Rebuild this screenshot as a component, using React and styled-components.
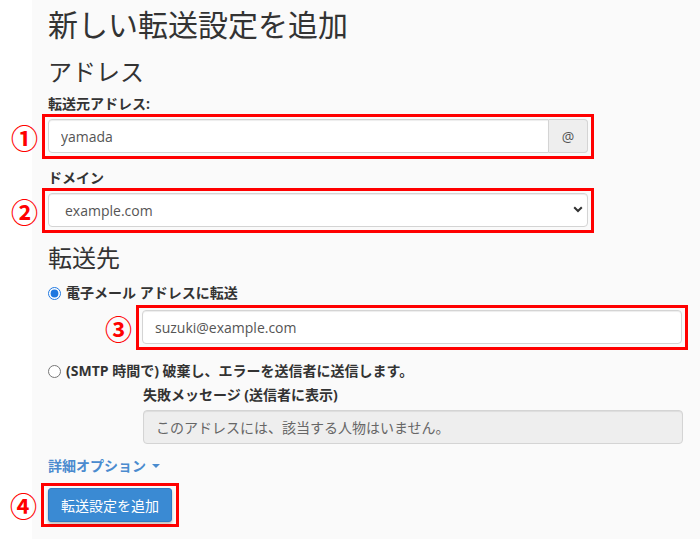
import styled, { createGlobalStyle } from "styled-components";

const GlobalStyle = createGlobalStyle`
  html, body {
    margin: 0;
    padding: 0;
    background: #fff;
  }
  body {
    font-family: "Open Sans", "Noto Sans CJK JP", sans-serif;
    font-size: 14px;
    color: #333;
  }
`;

const Page = styled.div`
  display: flex;
  min-height: 539px;
`;

const Gutter = styled.div`
  width: 32px;
  flex-shrink: 0;
  background: #fff;
`;

const Panel = styled.main`
  flex: 1;
  background: #fafafa;
  padding: 8px 12px 0 16px;
`;

const Title = styled.h1`
  margin: 0;
  font-size: 30px;
  font-weight: 400;
  line-height: 33px;
  color: #333;
`;

const SectionTitle = styled.h2`
  margin: ${(p) => p.$top || 18}px 0 0;
  font-size: 24px;
  font-weight: 400;
  line-height: 26px;
  color: #333;
`;

const FieldLabel = styled.label`
  display: block;
  margin-top: ${(p) => p.$top || 0}px;
  font-weight: 700;
  line-height: 18px;
  color: #333;
`;

const Callout = styled.div`
  position: relative;
  width: fit-content;
  border: 3px solid #f00;
  padding: ${(p) => p.$pad || "2px 3px 3px"};
  margin: ${(p) => p.$margin || "0 0 0 -6px"};
`;

const Marker = styled.span`
  position: absolute;
  right: calc(100% + 7px);
  top: 50%;
  transform: translateY(-50%);
  font-family: "Noto Sans CJK JP", sans-serif;
  font-size: 27px;
  font-weight: 700;
  line-height: 1;
  color: #f00;
`;

const InputGroup = styled.div`
  display: flex;
  width: 540px;
`;

const TextInput = styled.input`
  box-sizing: border-box;
  width: ${(p) => (p.$grow ? "auto" : "540px")};
  flex: ${(p) => (p.$grow ? 1 : "none")};
  height: 34px;
  padding: 6px 12px;
  font: inherit;
  font-size: 14px;
  color: #555;
  background: #fff;
  border: 1px solid #d4d4d4;
  border-radius: ${(p) => (p.$grow ? "4px 0 0 4px" : "4px")};
  box-shadow: inset 0 1px 1px rgba(0, 0, 0, 0.075);
  outline: none;

  &:disabled {
    background: #eee;
    color: #666;
  }
`;

const Addon = styled.span`
  box-sizing: border-box;
  width: 39px;
  display: flex;
  align-items: center;
  justify-content: center;
  background: #eee;
  color: #555;
  border: 1px solid #d4d4d4;
  border-left: none;
  border-radius: 0 4px 4px 0;
  font-size: 14px;
`;

const SelectWrap = styled.div`
  position: relative;
  width: 540px;
`;

const Select = styled.select`
  box-sizing: border-box;
  width: 100%;
  height: 34px;
  padding: 6px 12px 6px 16px;
  appearance: none;
  font: inherit;
  font-size: 14px;
  color: #555;
  background: #fff;
  border: 1px solid #d4d4d4;
  border-radius: 4px;
  box-shadow: inset 0 1px 1px rgba(0, 0, 0, 0.075);
`;

const Chevron = styled.svg`
  position: absolute;
  right: 5px;
  top: 13px;
  pointer-events: none;
`;

const RadioRow = styled.label`
  display: flex;
  align-items: center;
  gap: 5px;
  margin-top: ${(p) => p.$top || 0}px;
  font-weight: 700;
  line-height: 20px;
  color: #333;

  input {
    margin: 0;
    width: 13px;
    height: 13px;
    accent-color: #1f78e0;
  }
`;

const Indent = styled.div`
  margin-left: 95px;
  margin-top: ${(p) => p.$top || 0}px;
`;

const SubLabel = styled.div`
  font-weight: 700;
  line-height: 20px;
  margin-bottom: 5px;
  color: #333;
`;

const ToggleLink = styled.a`
  display: inline-flex;
  align-items: center;
  gap: 6px;
  margin-top: 12px;
  font-weight: 700;
  line-height: 20px;
  color: #4a8bcf;
  text-decoration: none;
  cursor: pointer;
`;

const Caret = styled.span`
  width: 0;
  height: 0;
  border-left: 4px solid transparent;
  border-right: 4px solid transparent;
  border-top: 4px solid #4a8bcf;
`;

const PrimaryButton = styled.button`
  box-sizing: border-box;
  height: 34px;
  padding: 6px 12px;
  font: inherit;
  font-size: 14px;
  color: #fff;
  background: #3a8ad3;
  border: 1px solid #2f7bc2;
  border-radius: 3px;
  box-shadow: 0 2px 3px rgba(0, 0, 0, 0.25);
  cursor: pointer;
`;

export default function App() {
  return (
    <>
      <GlobalStyle />
      <Page>
        <Gutter />
        <Panel>
          <Title>新しい転送設定を追加</Title>

          <SectionTitle>アドレス</SectionTitle>
          <FieldLabel $top={10}>転送元アドレス:</FieldLabel>
          <Callout $margin="1px 0 0 -6px">
            <Marker>①</Marker>
            <InputGroup>
              <TextInput $grow defaultValue="yamada" />
              <Addon>@</Addon>
            </InputGroup>
          </Callout>

          <FieldLabel $top={10}>ドメイン</FieldLabel>
          <Callout $margin="1px 0 0 -6px">
            <Marker>②</Marker>
            <SelectWrap>
              <Select defaultValue="example.com">
                <option>example.com</option>
              </Select>
              <Chevron width="10" height="7" viewBox="0 0 10 7">
                <path
                  d="M1.2 1.2L5 5L8.8 1.2"
                  fill="none"
                  stroke="#333"
                  strokeWidth="2"
                />
              </Chevron>
            </SelectWrap>
          </Callout>

          <SectionTitle $top={12}>転送先</SectionTitle>
          <RadioRow $top={12}>
            <input type="radio" name="dest" defaultChecked />
            電子メール アドレスに転送
          </RadioRow>
          <Callout $margin="2px 0 0 88px">
            <Marker>③</Marker>
            <TextInput defaultValue="suzuki@example.com" />
          </Callout>

          <RadioRow $top={11}>
            <input type="radio" name="dest" />
            (SMTP 時間で) 破棄し、エラーを送信者に送信します。
          </RadioRow>
          <Indent $top={4}>
            <SubLabel>失敗メッセージ (送信者に表示)</SubLabel>
            <TextInput disabled defaultValue="このアドレスには、該当する人物はいません。" />
          </Indent>

          <ToggleLink>
            詳細オプション <Caret />
          </ToggleLink>

          <Callout $pad="2px 4px" $margin="7px 0 0 -7px">
            <Marker>④</Marker>
            <PrimaryButton>転送設定を追加</PrimaryButton>
          </Callout>
        </Panel>
      </Page>
    </>
  );
}
